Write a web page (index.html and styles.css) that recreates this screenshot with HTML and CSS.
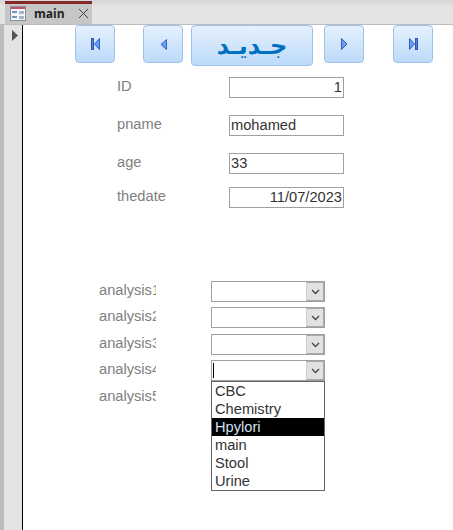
FILE: index.html
```html
<!DOCTYPE html>
<html lang="en">

<head>
	<meta charset="UTF-8">
	<title>main</title>
	<link rel="stylesheet" href="styles.css">
</head>

<body>

	<!-- Tab strip -->
	<div class="tab-strip">
		<div class="tab">
			<svg class="tab-icon" width="16" height="15" viewBox="0 0 16 15">
				<rect x="0.5" y="0.5" width="15" height="14" fill="#f4f6fa" stroke="#8a8fa0"/>
				<rect x="1" y="1" width="14" height="2" fill="#c8506a"/>
				<rect x="2" y="5" width="5" height="2" fill="#7f95b8"/>
				<rect x="2" y="10" width="5" height="2" fill="#7f95b8"/>
				<rect x="9" y="5" width="5" height="3" fill="#a9b4c8"/>
				<rect x="9" y="10" width="5" height="3" fill="#a9b4c8"/>
			</svg>
			<span class="tab-name">main</span>
			<svg class="tab-close" width="9" height="9" viewBox="0 0 9 9">
				<path d="M0 0 L9 9 M9 0 L0 9" stroke="#444" stroke-width="1" fill="none"/>
			</svg>
		</div>
	</div>

	<div class="main">
		<!-- Record selector -->
		<div class="selector">
			<svg width="6" height="11" viewBox="0 0 6 11"><path d="M0 0 L6 5.5 L0 11 Z" fill="#555"/></svg>
		</div>

		<div class="form">
			<!-- Navigation buttons -->
			<div class="nav">
				<button class="nav-btn first-btn">
					<svg width="9" height="12" viewBox="0 0 9 12"><rect x="0.5" y="0.5" width="2" height="11" fill="#4a7fe0" stroke="#2f55b0"/><path d="M8.5 0.5 L3.5 6 L8.5 11.5 Z" fill="#6a9cf0" stroke="#2f62c8"/></svg>
				</button>
				<button class="nav-btn prev-btn">
					<svg width="7" height="11" viewBox="0 0 7 11"><path d="M6.5 0.5 L1 5.5 L6.5 10.5 Z" fill="#6a9cf0" stroke="#2f62c8"/></svg>
				</button>
				<button class="nav-btn new-btn" dir="rtl">جـديـد</button>
				<button class="nav-btn next-btn">
					<svg width="7" height="12" viewBox="0 0 7 12"><path d="M0.5 0.5 L6 6 L0.5 11.5 Z" fill="#6a9cf0" stroke="#2f62c8"/></svg>
				</button>
				<button class="nav-btn last-btn">
					<svg width="9" height="12" viewBox="0 0 9 12"><path d="M0.5 0.5 L5.5 6 L0.5 11.5 Z" fill="#6a9cf0" stroke="#2f62c8"/><rect x="6.5" y="0.5" width="2" height="11" fill="#4a7fe0" stroke="#2f55b0"/></svg>
				</button>
			</div>

			<!-- Record fields -->
			<div class="fields">
				<div class="field-row row-id">
					<span class="field-label">ID</span>
					<div class="field-box align-right">1</div>
				</div>
				<div class="field-row row-name">
					<span class="field-label">pname</span>
					<div class="field-box">mohamed</div>
				</div>
				<div class="field-row row-age">
					<span class="field-label">age</span>
					<div class="field-box">33</div>
				</div>
				<div class="field-row row-date">
					<span class="field-label">thedate</span>
					<div class="field-box align-right">11/07/2023</div>
				</div>
			</div>

			<!-- Analysis combo boxes -->
			<div class="analysis">
				<div class="combo-row">
					<span class="combo-label">analysis1</span>
					<div class="combo"><div class="combo-text"></div><div class="combo-arrow"><svg width="9" height="6" viewBox="0 0 9 6"><path d="M1 1 L4.5 4.5 L8 1" fill="none" stroke="#444" stroke-width="1.3"/></svg></div></div>
				</div>
				<div class="combo-row">
					<span class="combo-label">analysis2</span>
					<div class="combo"><div class="combo-text"></div><div class="combo-arrow"><svg width="9" height="6" viewBox="0 0 9 6"><path d="M1 1 L4.5 4.5 L8 1" fill="none" stroke="#444" stroke-width="1.3"/></svg></div></div>
				</div>
				<div class="combo-row row-gap">
					<span class="combo-label">analysis3</span>
					<div class="combo"><div class="combo-text"></div><div class="combo-arrow"><svg width="9" height="6" viewBox="0 0 9 6"><path d="M1 1 L4.5 4.5 L8 1" fill="none" stroke="#444" stroke-width="1.3"/></svg></div></div>
				</div>
				<div class="combo-row">
					<span class="combo-label">analysis4</span>
					<div class="combo open-combo">
						<div class="combo-text"><span class="caret"></span></div>
						<div class="combo-arrow"><svg width="9" height="6" viewBox="0 0 9 6"><path d="M1 1 L4.5 4.5 L8 1" fill="none" stroke="#444" stroke-width="1.3"/></svg></div>
						<ul class="combo-list">
							<li>CBC</li>
							<li>Chemistry</li>
							<li class="selected">Hpylori</li>
							<li>main</li>
							<li>Stool</li>
							<li>Urine</li>
						</ul>
					</div>
				</div>
				<div class="combo-row row-gap">
					<span class="combo-label">analysis5</span>
				</div>
			</div>
		</div>
	</div>

</body>

</html>
```

FILE: styles.css
```css
body
{
	margin: 0;
	width: 453px;
	height: 530px;
	overflow: hidden;
	background-color: white;
	font-family: "Liberation Sans", Arial, sans-serif;
	font-size: 14.67px;
	color: #333;
}

/* Tab strip */
.tab-strip
{
	height: 23px;
	padding-left: 5px;
	padding-top: 1px;
	background: linear-gradient(#d4d4d4, #e4e4e4 6px);
	border-bottom: 1px solid #bdbdbd;
}

.tab
{
	width: 87px;
	height: 18px;
	padding-bottom: 2px;
	border-top: 3px solid #842828;
	background-color: #c6c6c6;
	display: flex;
	align-items: center;
}

.tab-icon
{
	margin-left: 5px;
}

.tab-name
{
	margin-left: 8px;
	font-size: 12px;
	font-weight: bold;
	color: #222;
	font-family: "Open Sans", sans-serif;
}

.tab-close
{
	margin-left: 14px;
}

/* Main area */
.main
{
	display: flex;
	height: 505px;
}

.selector
{
	width: 23px;
	padding-top: 3px;
	padding-left: 12px;
	box-sizing: border-box;
	background: linear-gradient(to right, #bcbcbc 4px, #e4e4e4 4px);
	border-right: 1px solid black;
}

.form
{
	flex: 1;
	position: relative;
}

/* Navigation buttons */
.nav
{
	display: flex;
	align-items: flex-start;
	padding-left: 52px;
}

.nav-btn
{
	width: 40px;
	height: 38px;
	padding: 0;
	margin: 0;
	border: 1px solid #9cc3ea;
	border-radius: 4px;
	background: linear-gradient(#e6f1fd, #bcdafa);
	display: flex;
	align-items: center;
	justify-content: center;
	cursor: pointer;
}

.prev-btn
{
	margin-left: 28px;
}

.new-btn
{
	width: 122px;
	height: 41px;
	margin-left: 8px;
	font-family: "DejaVu Sans", sans-serif;
	font-size: 24px;
	font-weight: bold;
	color: #0070c0;
}

.next-btn
{
	margin-left: 11px;
}

.last-btn
{
	margin-left: 29px;
}

/* Record fields */
.fields
{
	padding-left: 94px;
	padding-top: 11px;
}

.field-row
{
	display: flex;
	align-items: flex-start;
}

.row-name,
.row-age
{
	margin-top: 17px;
}

.row-date
{
	margin-top: 13px;
}

.field-label
{
	width: 112px;
	color: #808080;
	line-height: 18px;
}

.field-box
{
	width: 111px;
	height: 19px;
	border: 1px solid #a0a0a0;
	line-height: 19px;
	padding: 0 1px;
	color: #333;
}

.align-right
{
	text-align: right;
}

/* Analysis combo boxes */
.analysis
{
	display: flex;
	flex-direction: column;
	padding-left: 76px;
	padding-top: 73px;
}

.combo-row
{
	display: flex;
	height: 21px;
	margin-bottom: 5px;
}

.row-gap
{
	margin-top: 1px;
}

.combo-label
{
	width: 57px;
	margin-right: 55px;
	overflow: hidden;
	white-space: nowrap;
	color: #808080;
	line-height: 19px;
}

.combo
{
	width: 114px;
	height: 21px;
	box-sizing: border-box;
	border: 1px solid #a0a0a0;
	display: flex;
	position: relative;
}

.combo-text
{
	flex: 1;
	padding-left: 1px;
}

.caret
{
	display: block;
	width: 1px;
	height: 15px;
	margin-top: 2px;
	background-color: black;
}

.combo-arrow
{
	width: 16px;
	background-color: #e1e1e1;
	border: 1px solid #a8a8a8;
	border-left-color: #cfcfcf;
	display: flex;
	align-items: center;
	justify-content: center;
}

.combo-list
{
	position: absolute;
	left: -1px;
	top: 20px;
	width: 112px;
	margin: 0;
	padding: 0;
	list-style: none;
	border: 1px solid #646464;
	background-color: white;
	z-index: 2;
}

.combo-list li
{
	height: 18px;
	line-height: 18px;
	padding-left: 3px;
}

.combo-list .selected
{
	background-color: black;
	color: #cfe0f4;
}
```
